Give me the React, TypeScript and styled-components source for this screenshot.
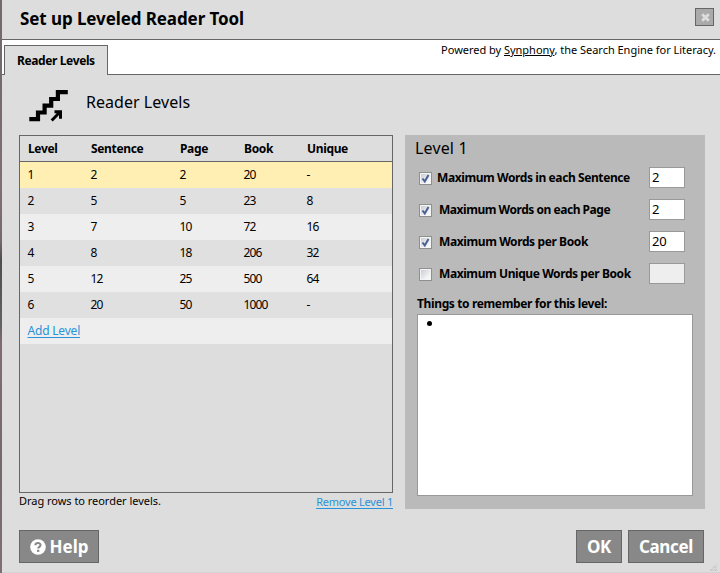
import React from "react";
import styled, { createGlobalStyle } from "styled-components";

const Global = createGlobalStyle`
  * { box-sizing: border-box; }
  body { margin: 0; overflow: hidden; font-family: "Noto Sans", "Open Sans", sans-serif; font-size: 12px; color: #000; }
`;

const Frame = styled.div`
  position: relative;
  width: 720px;
  height: 573px;
  padding-left: 2px;
  background: linear-gradient(#75696b 0 70px, #806f72 190px, #77696b 240px, #4e4e51 260px, #626164 325px, #806c70 345px, #75686c 470px, #806f71);
`;
const Dialog = styled.div`
  height: 573px;
  background: #ddd;
  display: flex;
  flex-direction: column;
  border-bottom: 1px solid #d3d3d3;
`;
const TitleBar = styled.header`
  height: 40px;
  flex: none;
  display: flex;
  justify-content: space-between;
  align-items: flex-start;
  padding: 8px 6px 0 18px;
  border-bottom: 1px solid #666;
`;
const Line = styled.span<{ $size?: number; $bold?: boolean; $track?: number; $h?: number }>`
  display: block;
  white-space: nowrap;
  font-size: ${(p) => p.$size ?? 12}px;
  font-weight: ${(p) => (p.$bold ? 700 : 400)};
  letter-spacing: ${(p) => p.$track ?? 0}px;
  line-height: ${(p) => p.$h ?? 16}px;
`;
const CloseButton = styled.button`
  width: 19px;
  height: 18px;
  padding: 0 0 0 2px;
  border: 1px solid #666;
  background: #aaa;
  display: flex;
  align-items: center;
  justify-content: center;
`;
const TabStrip = styled.div`
  height: 35px;
  flex: none;
  background: #fff;
  display: flex;
  justify-content: space-between;
  align-items: flex-end;
  padding: 0 4px 0 2px;
  box-shadow: inset 0 -1px #666;
`;
const Tab = styled.div`
  width: 104px;
  height: 30px;
  padding: 7px 0 0 12px;
  border: 1px solid #666;
  border-bottom: 0;
  background: #ddd;
`;
const Credit = styled.div`
  align-self: flex-start;
  padding-top: 2px;
`;
const Section = styled.div`
  height: 60px;
  flex: none;
  display: flex;
  padding: 14px 0 0 27px;
  gap: 17px;
`;
const Heading = styled.div`
  padding-top: 2px;
`;
const Columns = styled.main`
  display: flex;
  gap: 12px;
  padding-left: 17px;
  height: 395px;
  flex: none;
`;
const Left = styled.section`
  width: 374px;
`;
const Table = styled.div`
  height: 358px;
  border: 1px solid #666;
`;
const Row = styled.div<{ $bg?: string; $head?: boolean }>`
  display: grid;
  grid-template-columns: 63px 89px 64px 63px 1fr;
  align-items: center;
  height: 26px;
  padding-left: ${(p) => (p.$head ? 8 : 7.5)}px;
  background: ${(p) => p.$bg ?? "transparent"};
  box-shadow: ${(p) => (p.$head ? "inset 0 -1px #666" : "none")};
`;
const Link = styled.a`
  color: #2a92d8;
  text-decoration: underline;
  text-underline-offset: 2px;
`;
const Under = styled.div`
  display: flex;
  justify-content: space-between;
`;
const Panel = styled.section`
  width: 300px;
  height: 374px;
  padding: 5px 12px 0;
  background: #bababa;
`;
const PanelTitle = styled.div`
  height: 27px;
  margin-left: -2px;
`;
const Limit = styled.label<{ $inset: number }>`
  display: flex;
  height: 21px;
  margin-bottom: 11px;
  padding: 0 8px 0 2px;
  > span { margin-left: ${(p) => p.$inset}px; padding-top: 3px; margin-right: auto; }
`;
const Check = styled.i`
  width: 13px;
  height: 13px;
  margin-top: 5px;
  border: 1px solid #8e8f8f;
  background: linear-gradient(135deg, #c3c7cf, #f6f6f6 75%);
  box-shadow: inset 0 0 0 1px #f4f4f4;
  svg { display: block; }
`;
const Field = styled.div<{ $off?: boolean }>`
  width: 36px;
  height: 21px;
  padding-left: 2px;
  border: 1px solid #999;
  background: ${(p) => (p.$off ? "#eee" : "#fff")};
`;
const NotesLabel = styled.div`
  padding-top: 1px;
`;
const Notes = styled.div`
  height: 182px;
  margin-top: 2px;
  padding: 6px 0 0 9px;
  border: 1px solid #999;
  background: #fff;
`;
const Bullet = styled.i`
  display: block;
  width: 5px;
  height: 5px;
  border-radius: 50%;
  background: #000;
`;
const Footer = styled.footer`
  display: flex;
  gap: 6px;
  padding: 0 16px 0 17px;
`;
const Button = styled.button<{ $w: number; $push?: boolean }>`
  width: ${(p) => p.$w}px;
  height: 33px;
  margin-right: ${(p) => (p.$push ? "auto" : "0")};
  padding: 1px 0 0;
  display: flex;
  align-items: center;
  justify-content: center;
  gap: 4px;
  border: 1px solid #666;
  background: #888;
  color: #fff;
  font-family: inherit;
`;
const Grip = styled.svg`
  position: absolute;
  right: 3px;
  bottom: 2px;
`;

const levels = [
  ["1", "2", "2", "20", "-"],
  ["2", "5", "5", "23", "8"],
  ["3", "7", "10", "72", "16"],
  ["4", "8", "18", "206", "32"],
  ["5", "12", "25", "500", "64"],
  ["6", "20", "50", "1000", "-"],
];
const limits = [
  { text: "Maximum Words in each Sentence", value: "2", inset: 5, track: -0.41 },
  { text: "Maximum Words on each Page", value: "2", inset: 7, track: -0.47 },
  { text: "Maximum Words per Book", value: "20", inset: 7, track: -0.4 },
  { text: "Maximum Unique Words per Book", value: "", inset: 7, track: -0.42 },
];

export default function App() {
  return (
    <Frame>
      <Global />
      <Dialog>
        <TitleBar>
          <Line $size={17} $bold $h={22} $track={-0.09}>Set up Leveled Reader Tool</Line>
          <CloseButton aria-label="Close">
            <svg width="9" height="9" viewBox="0 0 9 9">
              <path d="M1.2 1.2 7.8 7.8M7.8 1.2 1.2 7.8" stroke="#ddd" strokeWidth="2.8" />
            </svg>
          </CloseButton>
        </TitleBar>
        <TabStrip>
          <Tab><Line $bold $track={-0.38}>Reader Levels</Line></Tab>
          <Credit>
            <Line $size={11} $track={-0.02}>Powered by <u>Synphony</u>, the Search Engine for Literacy.</Line>
          </Credit>
        </TabStrip>
        <Section>
          <svg width="40" height="33" viewBox="0 0 40 33">
            <path d="M.3 30.200H9V23.500h6.600V16.700h6.600V10h6.700V3.200h9.900" fill="none" stroke="#000" strokeWidth="4.200" />
            <path d="M22.700 31.500 31 23M25.500 22.700h6v7" fill="none" stroke="#000" strokeWidth="3" />
          </svg>
          <Heading><Line $size={16} $h={22} $track={0.04}>Reader Levels</Line></Heading>
        </Section>
        <Columns>
          <Left>
            <Table>
              <Row $head>
                {["Level", "Sentence", "Page", "Book", "Unique"].map((h) => (
                  <Line $bold $track={-0.35} key={h}>{h}</Line>
                ))}
              </Row>
              {levels.map((r, i) => (
                <Row key={r[0]} $bg={i === 0 ? "#ffefb2" : i % 2 ? "#e0e0e0" : "#eee"}>
                  {r.map((c, j) => <Line key={j} $track={-0.85}>{c}</Line>)}
                </Row>
              ))}
              <Row $bg="#eee"><Line $track={-0.2}><Link>Add Level</Link></Line></Row>
            </Table>
            <Under>
              <Line $size={11} $track={-0.03}>Drag rows to reorder levels.</Line>
              <Line $size={11} $h={18} $track={-0.22}><Link>Remove Level 1</Link></Line>
            </Under>
          </Left>
          <Panel>
            <PanelTitle><Line $size={16} $h={17} $track={0.15}>Level 1</Line></PanelTitle>
            {limits.map((l, i) => (
              <Limit key={i} $inset={l.inset}>
                <Check>
                  {l.value && (
                    <svg width="11" height="11" viewBox="0 0 11 11">
                      <path d="M2.500 5.500 4.800 8.500 8.500 2" fill="none" stroke="#4a5f97" strokeWidth="2" />
                    </svg>
                  )}
                </Check>
                <Line $bold $track={l.track}>{l.text}</Line>
                <Field $off={!l.value}><Line $size={13} $h={19} $track={-0.3}>{l.value}</Line></Field>
              </Limit>
            ))}
            <NotesLabel><Line $bold $track={-0.37}>Things to remember for this level:</Line></NotesLabel>
            <Notes><Bullet /></Notes>
          </Panel>
        </Columns>
        <Footer>
          <Button $w={80} $push>
            <svg width="16" height="16" viewBox="0 0 16 16">
              <circle cx="8" cy="8" r="7.8" fill="#fff" />
              <path d="M5.400 6.200C5.600 3.300 10.500 3.300 10.500 6c0 1.900-2.300 1.700-2.300 3.600" fill="none" stroke="#888" strokeWidth="2.100" />
              <path d="M7 10.800h2.300v2.100H7z" fill="#888" />
            </svg>
            <Line $size={17} $bold $h={24}>Help</Line>
          </Button>
          <Button $w={46}><Line $size={17} $bold $h={24} $track={-0.3}>OK</Line></Button>
          <Button $w={76}><Line $size={17} $bold $h={24} $track={-0.35}>Cancel</Line></Button>
        </Footer>
      </Dialog>
      <Grip width="7" height="7" viewBox="0 0 7 7">
        <path d="M0 7 7 0M2.500 7 7 2.500M5 7 7 5" stroke="#aaa" strokeDasharray="1 1" />
      </Grip>
    </Frame>
  );
}
